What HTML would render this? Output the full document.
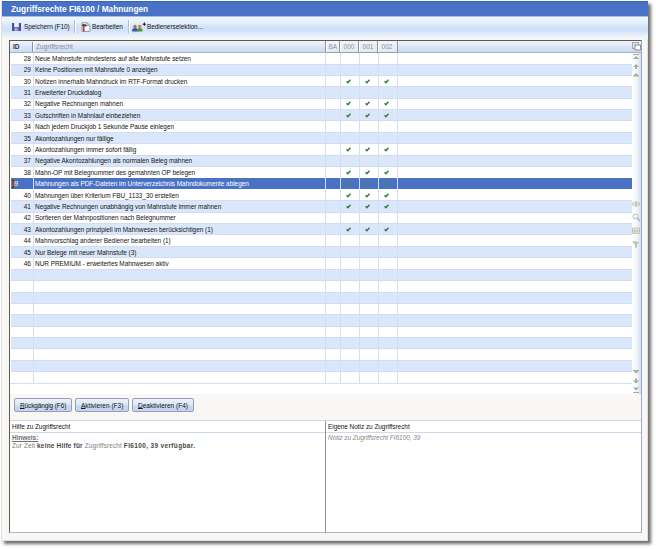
<!DOCTYPE html><html><head><meta charset="utf-8"><style>
*{margin:0;padding:0;box-sizing:border-box}
html,body{width:656px;height:549px;overflow:hidden;background:#fff;font-family:"Liberation Sans",sans-serif;font-size:7.2px;letter-spacing:-0.05px;color:#141414}
.a{position:absolute}
.s{display:inline-block;transform:scaleX(.9);transform-origin:0 0}
.sr{display:inline-block;transform:scaleX(.9);transform-origin:100% 0}
#dlg{left:1px;top:1px;width:647px;height:539.5px;background:#f8f7f3;border:1px solid #e0e0e0;box-shadow:3px 3px 3px rgba(50,50,50,.7)}
#title{left:2px;top:1.2px;width:645.5px;height:15px;z-index:2;background:#4872c5;box-shadow:inset 0 1px 0 #3d64b4,0 1px 0 rgba(80,118,196,.45)}
#title .t{left:9px;top:2.7px;font-size:9px;font-weight:bold;color:#fff;letter-spacing:0px;white-space:nowrap;transform:scaleX(.92);transform-origin:0 0}
#close{left:637px;top:5px;width:7px;height:7px}
#tb{left:2px;top:16.2px;width:645.5px;height:22.6px;background:linear-gradient(#f0f8fe 0%,#e8f2fc 25%,#d4e4f9 45%,#d0e1f8 62%,#e4eefa 82%,#f8f7f2 100%)}
.tt{white-space:nowrap;top:21.7px;transform:scaleX(.9);transform-origin:0 0}
.sep{width:1px;background:#b8bcc4;top:19.7px;height:13.3px;box-shadow:1px 0 0 #fff}
#frame{left:9px;top:40px;width:633px;height:493px;border-top:1px solid #5a5a5a;border-left:1px solid #5a5a5a;border-right:1px solid #9aaacc;border-bottom:1px solid #b0b6cc}
#grid{left:10px;top:41px;width:631px;height:353px;background:#fff;overflow:hidden}
#hdr{left:10px;top:41px;width:631px;height:11.5px;background:linear-gradient(#f2f6fd,#dce7f8 50%,#cadaf3);border-bottom:1px solid #a9b1c0}
.row{left:11px;width:621px;height:11.4px;white-space:nowrap}
.alt{background:#dae7fa;border-top:1px solid #d3dcf0;border-bottom:1px solid #d3dcf0}
.sel{background:#4a72c4;color:#fff}
.vl{width:1px;background:#d3dff2}
.ck{color:#3d9442;font-size:7px;font-weight:bold}
#scroll{left:632px;top:52.5px;width:9px;height:341.5px;background:linear-gradient(90deg,#ffffff,#f3f6fb 50%,#cfdcf2)}
.btn{top:398.4px;height:14px;border:1px solid #92a0bb;border-radius:2px;background:linear-gradient(#edf2fa,#dde7f6 45%,#c9d8f1 60%,#c3d3ef);white-space:nowrap;letter-spacing:-0.32px}
.btn span{position:absolute;top:1.5px;transform:scaleX(.9);transform-origin:0 0}
u{text-decoration:underline;text-decoration-thickness:0.6px;text-underline-offset:0px}
#pnl{left:10px;top:420px;width:631px;height:112px;background:#fff;border-top:1px solid #cdd6ea}
</style></head><body>
<div id="dlg" class="a"></div>
<div id="title" class="a"><div class="t a">Zugriffsrechte FI6100 / Mahnungen</div></div>
<svg id="close" class="a" viewBox="0 0 7 7"><path d="M1 1L6 6M6 1L1 6" stroke="#fff" stroke-width="1.3"/></svg>
<div id="tb" class="a"></div>
<svg class="a" style="left:12px;top:23px" width="9" height="8" viewBox="0 0 9 8"><path d="M0 0H9V8H0Z" fill="#4b509c"/><rect x="2.2" y="0" width="4.6" height="4.2" fill="#eef0f8"/><rect x="2.2" y="5" width="4.6" height="3" fill="#7c80bc"/><rect x="3.3" y="5.6" width="1.2" height="2" fill="#dfe2f2"/></svg>
<div class="a tt" style="left:23.5px">Speichern (F10)</div>
<div class="a sep" style="left:74px"></div>
<svg class="a" style="left:80.5px;top:21.5px" width="10" height="10" viewBox="0 0 10 10"><path d="M1 0.8H6.2L9 3.6V9.4H1Z" fill="#f6f8fc" stroke="#959bab" stroke-width="1"/><path d="M6.2 0.8V3.6H9" fill="none" stroke="#959bab" stroke-width="0.8"/><path d="M1.2 2.6Q3.5 1.8 5.8 3.2L5.2 4.4Q4 3.8 3.6 4.2V9.6H1.8V4.2Q1.4 4 1.2 3.8Z" fill="#b8483a"/><path d="M1.2 2.6Q3.5 1.8 5.8 3.2L5.2 4.4Q3.5 3.6 1.2 3.8Z" fill="#3e3e48"/></svg>
<div class="a tt" style="left:91.5px">Bearbeiten</div>
<div class="a sep" style="left:128px"></div>
<svg class="a" style="left:132px;top:22px" width="15" height="10" viewBox="0 0 15 10"><path d="M0.3 9.6V7.6Q0.3 5.9 3 5.9Q5.7 5.9 5.7 7.6V9.6Z" fill="#3456ae"/><path d="M5 9.6V7.6Q5 5.9 7.7 5.9Q10.4 5.9 10.4 7.6V9.6Z" fill="#4c9634"/><circle cx="3" cy="4.4" r="1.7" fill="#b86c34"/><circle cx="7.7" cy="4.4" r="1.7" fill="#c8843e"/><path d="M12.3 0L12.9 1.6L14.5 2.2L12.9 2.8L12.3 4.4L11.7 2.8L10.1 2.2L11.7 1.6Z" fill="#111"/></svg>
<div class="a tt" style="left:146.5px">Bedienerselektion...</div>
<div id="frame" class="a"></div>
<div id="grid" class="a"></div>
<div class="row a" style="top:52.50px"></div>
<div class="row a alt" style="top:63.60px;height:12.20px"></div>
<div class="row a" style="top:75.30px"></div>
<div class="row a alt" style="top:86.40px;height:12.20px"></div>
<div class="row a" style="top:98.10px"></div>
<div class="row a alt" style="top:109.20px;height:12.20px"></div>
<div class="row a" style="top:120.90px"></div>
<div class="row a alt" style="top:132.00px;height:12.20px"></div>
<div class="row a" style="top:143.70px"></div>
<div class="row a alt" style="top:154.80px;height:12.20px"></div>
<div class="row a" style="top:166.50px"></div>
<div class="row a sel" style="top:177.90px"></div>
<div class="row a" style="top:189.30px"></div>
<div class="row a alt" style="top:200.40px;height:12.20px"></div>
<div class="row a" style="top:212.10px"></div>
<div class="row a alt" style="top:223.20px;height:12.20px"></div>
<div class="row a" style="top:234.90px"></div>
<div class="row a alt" style="top:246.00px;height:12.20px"></div>
<div class="row a" style="top:257.70px"></div>
<div class="row a alt" style="top:268.80px;height:12.20px"></div>
<div class="row a" style="top:280.50px"></div>
<div class="row a alt" style="top:291.60px;height:12.20px"></div>
<div class="row a" style="top:303.30px"></div>
<div class="row a alt" style="top:314.40px;height:12.20px"></div>
<div class="row a" style="top:326.10px"></div>
<div class="row a alt" style="top:337.20px;height:12.20px"></div>
<div class="row a" style="top:348.90px"></div>
<div class="row a alt" style="top:360.00px;height:12.20px"></div>
<div class="row a" style="top:371.70px"></div>
<div class="a vl" style="left:32.8px;top:52.5px;height:330.6px"></div>
<div class="a vl" style="left:324.7px;top:52.5px;height:330.6px"></div>
<div class="a vl" style="left:340.0px;top:52.5px;height:330.6px"></div>
<div class="a vl" style="left:359.0px;top:52.5px;height:330.6px"></div>
<div class="a vl" style="left:378.1px;top:52.5px;height:330.6px"></div>
<div class="a vl" style="left:396.7px;top:52.5px;height:330.6px"></div>
<div class="a" style="left:10px;width:20.9px;text-align:right;top:53.70px"><span class="sr">28</span></div>
<div class="a" style="left:35px;top:53.70px;white-space:nowrap"><span class="s">Neue Mahnstufe mindestens auf alte Mahnstufe setzen</span></div>
<div class="a" style="left:10px;width:20.9px;text-align:right;top:65.10px"><span class="sr">29</span></div>
<div class="a" style="left:35px;top:65.10px;white-space:nowrap"><span class="s">Keine Positionen mit Mahnstufe 0 anzeigen</span></div>
<div class="a" style="left:10px;width:20.9px;text-align:right;top:76.50px"><span class="sr">30</span></div>
<div class="a" style="left:35px;top:76.50px;white-space:nowrap"><span class="s">Notizen innerhalb Mahndruck im RTF-Format drucken</span></div>
<svg class="a" style="left:345.5px;top:78.5px" width="5" height="5" viewBox="0 0 5 5"><path d="M0.6 2.3L1.9 3.7L4.5 0.8" fill="none" stroke="#2f7d3c" stroke-width="1.45"/></svg>
<svg class="a" style="left:364.6px;top:78.5px" width="5" height="5" viewBox="0 0 5 5"><path d="M0.6 2.3L1.9 3.7L4.5 0.8" fill="none" stroke="#2f7d3c" stroke-width="1.45"/></svg>
<svg class="a" style="left:383.6px;top:78.5px" width="5" height="5" viewBox="0 0 5 5"><path d="M0.6 2.3L1.9 3.7L4.5 0.8" fill="none" stroke="#2f7d3c" stroke-width="1.45"/></svg>
<div class="a" style="left:10px;width:20.9px;text-align:right;top:87.90px"><span class="sr">31</span></div>
<div class="a" style="left:35px;top:87.90px;white-space:nowrap"><span class="s">Erweiterter Druckdialog</span></div>
<div class="a" style="left:10px;width:20.9px;text-align:right;top:99.30px"><span class="sr">32</span></div>
<div class="a" style="left:35px;top:99.30px;white-space:nowrap"><span class="s">Negative Rechnungen mahnen</span></div>
<svg class="a" style="left:345.5px;top:101.3px" width="5" height="5" viewBox="0 0 5 5"><path d="M0.6 2.3L1.9 3.7L4.5 0.8" fill="none" stroke="#2f7d3c" stroke-width="1.45"/></svg>
<svg class="a" style="left:364.6px;top:101.3px" width="5" height="5" viewBox="0 0 5 5"><path d="M0.6 2.3L1.9 3.7L4.5 0.8" fill="none" stroke="#2f7d3c" stroke-width="1.45"/></svg>
<svg class="a" style="left:383.6px;top:101.3px" width="5" height="5" viewBox="0 0 5 5"><path d="M0.6 2.3L1.9 3.7L4.5 0.8" fill="none" stroke="#2f7d3c" stroke-width="1.45"/></svg>
<div class="a" style="left:10px;width:20.9px;text-align:right;top:110.70px"><span class="sr">33</span></div>
<div class="a" style="left:35px;top:110.70px;white-space:nowrap"><span class="s">Gutschriften in Mahnlauf einbeziehen</span></div>
<svg class="a" style="left:345.5px;top:112.7px" width="5" height="5" viewBox="0 0 5 5"><path d="M0.6 2.3L1.9 3.7L4.5 0.8" fill="none" stroke="#2f7d3c" stroke-width="1.45"/></svg>
<svg class="a" style="left:364.6px;top:112.7px" width="5" height="5" viewBox="0 0 5 5"><path d="M0.6 2.3L1.9 3.7L4.5 0.8" fill="none" stroke="#2f7d3c" stroke-width="1.45"/></svg>
<svg class="a" style="left:383.6px;top:112.7px" width="5" height="5" viewBox="0 0 5 5"><path d="M0.6 2.3L1.9 3.7L4.5 0.8" fill="none" stroke="#2f7d3c" stroke-width="1.45"/></svg>
<div class="a" style="left:10px;width:20.9px;text-align:right;top:122.10px"><span class="sr">34</span></div>
<div class="a" style="left:35px;top:122.10px;white-space:nowrap"><span class="s">Nach jedem Druckjob 1 Sekunde Pause einlegen</span></div>
<div class="a" style="left:10px;width:20.9px;text-align:right;top:133.50px"><span class="sr">35</span></div>
<div class="a" style="left:35px;top:133.50px;white-space:nowrap"><span class="s">Akontozahlungen nur fällige</span></div>
<div class="a" style="left:10px;width:20.9px;text-align:right;top:144.90px"><span class="sr">36</span></div>
<div class="a" style="left:35px;top:144.90px;white-space:nowrap"><span class="s">Akontozahlungen immer sofort fällig</span></div>
<svg class="a" style="left:345.5px;top:146.9px" width="5" height="5" viewBox="0 0 5 5"><path d="M0.6 2.3L1.9 3.7L4.5 0.8" fill="none" stroke="#2f7d3c" stroke-width="1.45"/></svg>
<svg class="a" style="left:364.6px;top:146.9px" width="5" height="5" viewBox="0 0 5 5"><path d="M0.6 2.3L1.9 3.7L4.5 0.8" fill="none" stroke="#2f7d3c" stroke-width="1.45"/></svg>
<svg class="a" style="left:383.6px;top:146.9px" width="5" height="5" viewBox="0 0 5 5"><path d="M0.6 2.3L1.9 3.7L4.5 0.8" fill="none" stroke="#2f7d3c" stroke-width="1.45"/></svg>
<div class="a" style="left:10px;width:20.9px;text-align:right;top:156.30px"><span class="sr">37</span></div>
<div class="a" style="left:35px;top:156.30px;white-space:nowrap"><span class="s">Negative Akontozahlungen als normalen Beleg mahnen</span></div>
<div class="a" style="left:10px;width:20.9px;text-align:right;top:167.70px"><span class="sr">38</span></div>
<div class="a" style="left:35px;top:167.70px;white-space:nowrap"><span class="s">Mahn-OP mit Belegnummer des gemahnten OP belegen</span></div>
<svg class="a" style="left:345.5px;top:169.7px" width="5" height="5" viewBox="0 0 5 5"><path d="M0.6 2.3L1.9 3.7L4.5 0.8" fill="none" stroke="#2f7d3c" stroke-width="1.45"/></svg>
<svg class="a" style="left:364.6px;top:169.7px" width="5" height="5" viewBox="0 0 5 5"><path d="M0.6 2.3L1.9 3.7L4.5 0.8" fill="none" stroke="#2f7d3c" stroke-width="1.45"/></svg>
<svg class="a" style="left:383.6px;top:169.7px" width="5" height="5" viewBox="0 0 5 5"><path d="M0.6 2.3L1.9 3.7L4.5 0.8" fill="none" stroke="#2f7d3c" stroke-width="1.45"/></svg>
<div class="a" style="left:11px;top:179.10px;color:#fff"><span class="s">39</span></div>
<div class="a" style="left:35px;top:179.10px;color:#fff;white-space:nowrap"><span class="s">Mahnungen als PDF-Dateien im Unterverzeichnis Mahndokumente ablegen</span></div>
<svg class="a" style="left:345.5px;top:181.1px" width="5" height="5" viewBox="0 0 5 5"><path d="M0.6 2.3L1.9 3.7L4.5 0.8" fill="none" stroke="#3f8a55" stroke-width="1.45"/></svg>
<svg class="a" style="left:364.6px;top:181.1px" width="5" height="5" viewBox="0 0 5 5"><path d="M0.6 2.3L1.9 3.7L4.5 0.8" fill="none" stroke="#3f8a55" stroke-width="1.45"/></svg>
<svg class="a" style="left:383.6px;top:181.1px" width="5" height="5" viewBox="0 0 5 5"><path d="M0.6 2.3L1.9 3.7L4.5 0.8" fill="none" stroke="#3f8a55" stroke-width="1.45"/></svg>
<div class="a" style="left:10px;width:20.9px;text-align:right;top:190.50px"><span class="sr">40</span></div>
<div class="a" style="left:35px;top:190.50px;white-space:nowrap"><span class="s">Mahnungen über Kriterium FBU_1133_30 erstellen</span></div>
<svg class="a" style="left:345.5px;top:192.5px" width="5" height="5" viewBox="0 0 5 5"><path d="M0.6 2.3L1.9 3.7L4.5 0.8" fill="none" stroke="#2f7d3c" stroke-width="1.45"/></svg>
<svg class="a" style="left:364.6px;top:192.5px" width="5" height="5" viewBox="0 0 5 5"><path d="M0.6 2.3L1.9 3.7L4.5 0.8" fill="none" stroke="#2f7d3c" stroke-width="1.45"/></svg>
<svg class="a" style="left:383.6px;top:192.5px" width="5" height="5" viewBox="0 0 5 5"><path d="M0.6 2.3L1.9 3.7L4.5 0.8" fill="none" stroke="#2f7d3c" stroke-width="1.45"/></svg>
<div class="a" style="left:10px;width:20.9px;text-align:right;top:201.90px"><span class="sr">41</span></div>
<div class="a" style="left:35px;top:201.90px;white-space:nowrap"><span class="s">Negative Rechnungen unabhängig von Mahnstufe immer mahnen</span></div>
<svg class="a" style="left:345.5px;top:203.9px" width="5" height="5" viewBox="0 0 5 5"><path d="M0.6 2.3L1.9 3.7L4.5 0.8" fill="none" stroke="#2f7d3c" stroke-width="1.45"/></svg>
<svg class="a" style="left:364.6px;top:203.9px" width="5" height="5" viewBox="0 0 5 5"><path d="M0.6 2.3L1.9 3.7L4.5 0.8" fill="none" stroke="#2f7d3c" stroke-width="1.45"/></svg>
<svg class="a" style="left:383.6px;top:203.9px" width="5" height="5" viewBox="0 0 5 5"><path d="M0.6 2.3L1.9 3.7L4.5 0.8" fill="none" stroke="#2f7d3c" stroke-width="1.45"/></svg>
<div class="a" style="left:10px;width:20.9px;text-align:right;top:213.30px"><span class="sr">42</span></div>
<div class="a" style="left:35px;top:213.30px;white-space:nowrap"><span class="s">Sortieren der Mahnpositionen nach Belegnummer</span></div>
<div class="a" style="left:10px;width:20.9px;text-align:right;top:224.70px"><span class="sr">43</span></div>
<div class="a" style="left:35px;top:224.70px;white-space:nowrap"><span class="s">Akontozahlungen prinzipiell im Mahnwesen berücksichtigen (1)</span></div>
<svg class="a" style="left:345.5px;top:226.7px" width="5" height="5" viewBox="0 0 5 5"><path d="M0.6 2.3L1.9 3.7L4.5 0.8" fill="none" stroke="#2f7d3c" stroke-width="1.45"/></svg>
<svg class="a" style="left:364.6px;top:226.7px" width="5" height="5" viewBox="0 0 5 5"><path d="M0.6 2.3L1.9 3.7L4.5 0.8" fill="none" stroke="#2f7d3c" stroke-width="1.45"/></svg>
<svg class="a" style="left:383.6px;top:226.7px" width="5" height="5" viewBox="0 0 5 5"><path d="M0.6 2.3L1.9 3.7L4.5 0.8" fill="none" stroke="#2f7d3c" stroke-width="1.45"/></svg>
<div class="a" style="left:10px;width:20.9px;text-align:right;top:236.10px"><span class="sr">44</span></div>
<div class="a" style="left:35px;top:236.10px;white-space:nowrap"><span class="s">Mahnvorschlag anderer Bediener bearbeiten (1)</span></div>
<div class="a" style="left:10px;width:20.9px;text-align:right;top:247.50px"><span class="sr">45</span></div>
<div class="a" style="left:35px;top:247.50px;white-space:nowrap"><span class="s">Nur Belege mit neuer Mahnstufe (3)</span></div>
<div class="a" style="left:10px;width:20.9px;text-align:right;top:258.90px"><span class="sr">46</span></div>
<div class="a" style="left:35px;top:258.90px;white-space:nowrap"><span class="s">NUR PREMIUM - erweitertes Mahnwesen aktiv</span></div>
<svg class="a" style="left:10.5px;top:179.4px" width="4" height="10" viewBox="0 0 4 10"><rect x="0.6" y="0.3" width="2.8" height="8.8" rx="1.3" fill="#b27a48"/><path d="M2 1V8.4" stroke="#3a2a20" stroke-width="0.9"/><path d="M0.9 1.2H3.1M0.9 8.2H3.1" stroke="#2a2018" stroke-width="1"/></svg>
<div id="hdr" class="a"></div>
<div class="a" style="left:12.5px;top:42.4px;font-weight:bold;color:#333;transform:scaleX(.9);transform-origin:0 0">ID</div>
<div class="a" style="left:32px;top:42px;width:1px;height:10px;background:#8a8f99;box-shadow:1px 0 0 #fff"></div>
<div class="a" style="left:36px;top:42.4px;color:#868c98;letter-spacing:0.1px;transform:scaleX(.9);transform-origin:0 0">Zugriffsrecht</div>
<div class="a" style="left:325.5px;top:41px;width:14.5px;height:11.5px;background:linear-gradient(#f0f4fa,#e2e9f3);border-right:1px solid #8d939c;box-shadow:inset 1px 0 0 #fff;border-bottom:1px solid #9aa0aa;color:#8c919a;text-align:center;padding-top:1.3px"><span style="display:inline-block;transform:scaleX(.9);transform-origin:50% 0">BA</span></div>
<div class="a" style="left:340px;top:41px;width:19px;height:11.5px;background:linear-gradient(#f0f4fa,#e2e9f3);border-right:1px solid #8d939c;box-shadow:inset 1px 0 0 #fff;border-bottom:1px solid #9aa0aa;color:#8c919a;text-align:center;padding-top:1.3px"><span style="display:inline-block;transform:scaleX(.9);transform-origin:50% 0">000</span></div>
<div class="a" style="left:359px;top:41px;width:19px;height:11.5px;background:linear-gradient(#f0f4fa,#e2e9f3);border-right:1px solid #8d939c;box-shadow:inset 1px 0 0 #fff;border-bottom:1px solid #9aa0aa;color:#8c919a;text-align:center;padding-top:1.3px"><span style="display:inline-block;transform:scaleX(.9);transform-origin:50% 0">001</span></div>
<div class="a" style="left:378px;top:41px;width:19.5px;height:11.5px;background:linear-gradient(#f0f4fa,#e2e9f3);border-right:1px solid #8d939c;box-shadow:inset 1px 0 0 #fff;border-bottom:1px solid #9aa0aa;color:#8c919a;text-align:center;padding-top:1.3px"><span style="display:inline-block;transform:scaleX(.9);transform-origin:50% 0">002</span></div>
<div id="scroll" class="a"></div>
<div class="a" style="left:325px;top:41px;width:1px;height:11px;background:#8d939c"></div>
<div class="a" style="left:10px;top:382.6px;width:622px;height:1px;background:#d3dff2"></div>
<svg class="a" style="left:632px;top:42px" width="9" height="9" viewBox="0 0 9 9"><rect x="0.5" y="0.5" width="6" height="6" fill="#dfe3ea" stroke="#a4aab2"/><rect x="3" y="3" width="5.5" height="5" fill="#fbfcfd" stroke="#8a9098"/></svg>
<svg class="a" style="left:632.3px;top:54.3px" width="8" height="8" viewBox="0 0 8 8"><path d="M1 0.5H7" stroke="#a4b094" stroke-width="1"/><path d="M4 2L7 5H1Z" fill="#a4b094"/></svg>
<svg class="a" style="left:632.3px;top:62.6px" width="8" height="8" viewBox="0 0 8 8"><path d="M4 1L7 4H5V6H3V4H1Z" fill="#a4b094"/></svg>
<svg class="a" style="left:632.3px;top:71.3px" width="8" height="8" viewBox="0 0 8 8"><path d="M4 2L7.5 5.5H0.5Z" fill="#a4b094"/></svg>
<svg class="a" style="left:632.3px;top:367.5px" width="8" height="8" viewBox="0 0 8 8"><path d="M4 5.5L7.5 2H0.5Z" fill="#a4b094"/></svg>
<svg class="a" style="left:632.3px;top:376.5px" width="8" height="8" viewBox="0 0 8 8"><path d="M4 6.5L7 3.5H5V1.5H3V3.5H1Z" fill="#a4b094"/></svg>
<svg class="a" style="left:632.3px;top:385.5px" width="8" height="8" viewBox="0 0 8 8"><path d="M4 4.5L7 1.5H1Z" fill="#a4b094"/><path d="M1 6.5H7" stroke="#a4b094" stroke-width="1"/></svg>
<svg class="a" style="left:632.3px;top:199.7px" width="9" height="9" viewBox="0 0 9 9"><path d="M1 2.2V5.8M3.2 1.3V6.7M4.8 1.3V6.7M7 2.2V5.8" fill="none" stroke="#a9b59b" stroke-width="1"/></svg>
<svg class="a" style="left:632.3px;top:212.8px" width="9" height="9" viewBox="0 0 9 9"><circle cx="3.5" cy="3.5" r="2.4" fill="none" stroke="#b0baa2" stroke-width="0.9"/><path d="M5.3 5.3L8 8" stroke="#a8b29a" stroke-width="1.3"/></svg>
<svg class="a" style="left:632.3px;top:226.2px" width="9" height="9" viewBox="0 0 9 9"><path d="M0.5 2H7.5V7.5H0.5Z" fill="#e4e9dc" stroke="#b4bea8" stroke-width="0.8"/><path d="M2.5 3.5V6.5M5 3.5V6.5M1 4.8H7" stroke="#b4bea8" stroke-width="0.8"/></svg>
<svg class="a" style="left:632.3px;top:239.5px" width="9" height="9" viewBox="0 0 9 9"><path d="M0.5 1.5Q2 0.5 4 1.5Q6 2.5 7.5 1.5L5 4.5V7.5H3V4.5Z" fill="#b8c2ac"/></svg>
<div class="a btn" style="left:14.3px;width:58.1px"><span style="left:5.0px;letter-spacing:-0.12px"><u>R</u>ückgängig (F6)</span></div>
<div class="a btn" style="left:75.3px;width:54.1px"><span style="left:5.0px;letter-spacing:0.02px"><u>A</u>ktivieren (F3)</span></div>
<div class="a btn" style="left:131.8px;width:62.0px"><span style="left:5.0px;letter-spacing:0.02px"><u>D</u>eaktivieren (F4)</span></div>
<div id="pnl" class="a"></div>
<div class="a" style="left:10px;top:431.5px;width:631px;height:1px;background:#d0d8ec"></div>
<div class="a" style="left:325px;top:421px;width:1px;height:111.5px;background:#8c9098"></div>
<div class="a" style="transform:scaleX(.9);transform-origin:0 0;left:11.5px;top:421.6px">Hilfe zu Zugriffsrecht</div>
<div class="a" style="transform:scaleX(.9);transform-origin:0 0;left:11.5px;top:433px;color:#707070;font-weight:bold;text-decoration:underline">Hinweis:</div>
<div class="a" style="transform:scaleX(.9);transform-origin:0 0;left:11.5px;top:441px;color:#808080;white-space:nowrap;letter-spacing:0.12px">Zur Zeit <b style="color:#474747;letter-spacing:0.22px">keine Hilfe für</b> Zugriffsrecht <b style="color:#474747;letter-spacing:0.4px">FI6100, 39 verfügbar.</b></div>
<div class="a" style="transform:scaleX(.9);transform-origin:0 0;left:328px;top:421.6px">Eigene Notiz zu Zugriffsrecht</div>
<div class="a" style="transform:scaleX(.9);transform-origin:0 0;left:328px;top:433px;color:#8a8a8a;font-style:italic;white-space:nowrap">Notiz zu Zugriffsrecht FI6100, 39</div>
</body></html>
